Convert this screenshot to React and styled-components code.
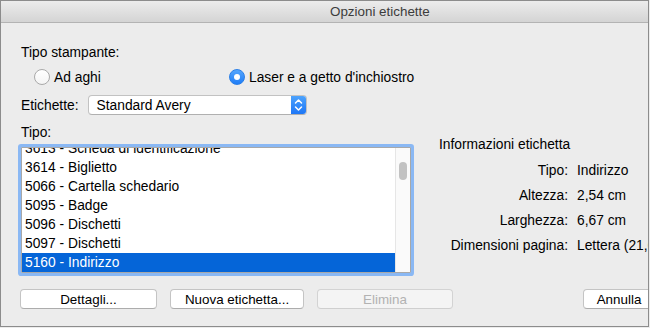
import React from 'react';
import styled, { createGlobalStyle } from 'styled-components';

const Global = createGlobalStyle`
  html, body { margin: 0; padding: 0; background: #ececec; }
  body { font-family: "Liberation Sans", Helvetica, Arial, sans-serif; color: #000; }
`;

const Frame = styled.div`
  width: 649px;
  height: 327px;
  box-sizing: border-box;
  border: 1px solid #8c8c8c;
  background: #ececec;
  overflow: hidden;
  display: flex;
  flex-direction: column;
`;

const TitleBar = styled.div`
  height: 21px;
  flex: none;
  border-bottom: 1px solid #b3b3b3;
  background: linear-gradient(#ececec, #d4d4d4);
  display: flex;
  align-items: center;
  padding-left: 329px;
  font-size: 13.4px;
  color: #3c3c3c;
  white-space: nowrap;
`;

const Body = styled.div`
  flex: 1;
  padding: 22px 0 0 20px;
  display: flex;
  flex-direction: column;
  font-size: 13.8px;
  white-space: nowrap;
`;

const Label = styled.div`
  height: 16px;
  line-height: 16px;
`;

const RadioRow = styled.div`
  display: flex;
  align-items: center;
  height: 18px;
  margin-top: 7px;
  padding-left: 13px;
`;

const RadioItem = styled.label`
  display: flex;
  align-items: center;
  gap: 4px;
  width: ${p => p.$w}px;
`;

const RadioCircle = styled.span`
  width: 16px;
  height: 16px;
  box-sizing: border-box;
  border-radius: 50%;
  display: flex;
  align-items: center;
  justify-content: center;
  ${p => p.$on ? `
    background: linear-gradient(#55a6fd, #1f7df7);
    border: 1px solid #2a7fe8;
  ` : `
    background: linear-gradient(#ffffff, #f4f4f4);
    border: 1px solid #a9a9a9;
  `}
`;

const RadioDot = styled.span`
  width: 6px;
  height: 6px;
  border-radius: 50%;
  background: #fff;
`;

const SelectRow = styled.div`
  display: flex;
  align-items: center;
  gap: 9px;
  margin-top: 9px;
  height: 20px;
`;

const Select = styled.div`
  width: 219px;
  height: 20px;
  box-sizing: border-box;
  border: 1px solid #c2c2c2;
  border-bottom-color: #b0b0b0;
  border-radius: 4px;
  background: #fff;
  display: flex;
  align-items: center;
  justify-content: space-between;
  padding-left: 8px;
  overflow: hidden;
`;

const Stepper = styled.span`
  width: 16px;
  height: 20px;
  margin-right: -1px;
  background: linear-gradient(#4fa5fd, #1b74f6);
  border-radius: 0 4px 4px 0;
  display: flex;
  align-items: center;
  justify-content: center;
`;

const Main = styled.div`
  display: flex;
  align-items: flex-start;
  margin-top: 10px;
`;

const LeftCol = styled.div`
  display: flex;
  flex-direction: column;
  gap: 6px;
`;

const ListBox = styled.div`
  width: 390px;
  height: 126px;
  box-sizing: border-box;
  border: 1px solid #a8a8a8;
  background: #fff;
  box-shadow: 0 0 0 3px #8ab8f4;
  border-radius: 1px;
  display: flex;
  overflow: hidden;
`;

const Rows = styled.div`
  flex: 1;
  overflow: hidden;
`;

const RowsInner = styled.div`
  margin-top: -9px;
`;

const Row = styled.div`
  height: 19px;
  line-height: 19px;
  padding-left: 3px;
  background: ${p => p.$sel ? '#0565d8' : 'transparent'};
  color: ${p => p.$sel ? '#fff' : '#000'};
`;

const ScrollTrack = styled.div`
  width: 14px;
  flex: none;
  background: #fafafa;
  border-left: 1px solid #e6e6e6;
  display: flex;
  justify-content: center;
`;

const Thumb = styled.div`
  width: 8px;
  height: 18px;
  margin-top: 14px;
  border-radius: 4px;
  background: #c2c2c2;
`;

const Info = styled.div`
  margin-left: 28px;
  padding-top: 12px;
  display: flex;
  flex-direction: column;
`;

const InfoTitle = styled.div`
  height: 16px;
  line-height: 16px;
  margin-bottom: 10px;
`;

const InfoGrid = styled.div`
  display: grid;
  grid-template-columns: 129px auto;
  column-gap: 9px;
  row-gap: 9px;
  line-height: 16px;
`;

const InfoKey = styled.div`
  text-align: right;
`;

const Buttons = styled.div`
  display: flex;
  gap: 13px;
  margin-top: 16px;
  margin-left: -1px;
`;

const Button = styled.div`
  width: ${p => p.$w}px;
  height: 20px;
  box-sizing: border-box;
  flex: none;
  border: 1px solid ${p => p.$disabled ? '#d3d3d3' : '#c4c4c4'};
  border-bottom-color: ${p => p.$disabled ? '#cfcfcf' : '#acacac'};
  border-radius: 4px;
  background: ${p => p.$disabled ? '#f4f4f4' : '#fff'};
  color: ${p => p.$disabled ? '#b2b2b2' : '#000'};
  display: flex;
  align-items: center;
  justify-content: center;
  font-size: 13.4px;
  ${p => p.$push ? 'margin-left: auto; margin-right: -7px;' : ''}
`;

const items = [
  '3613 - Scheda di identificazione',
  '3614 - Biglietto',
  '5066 - Cartella schedario',
  '5095 - Badge',
  '5096 - Dischetti',
  '5097 - Dischetti',
  '5160 - Indirizzo',
  '5161 - Indirizzo',
];

export default function App() {
  return (
    <>
      <Global />
      <Frame>
        <TitleBar>Opzioni etichette</TitleBar>
        <Body>
          <Label>Tipo stampante:</Label>
          <RadioRow>
            <RadioItem $w={195}>
              <RadioCircle />
              Ad aghi
            </RadioItem>
            <RadioItem $w={220}>
              <RadioCircle $on><RadioDot /></RadioCircle>
              Laser e a getto d'inchiostro
            </RadioItem>
          </RadioRow>
          <SelectRow>
            <span>Etichette:</span>
            <Select>
              <span>Standard Avery</span>
              <Stepper>
                <svg width="9" height="14" viewBox="0 0 9 14">
                  <path d="M1.5 5 L4.5 2 L7.5 5 M1.5 9 L4.5 12 L7.5 9" fill="none" stroke="#fff" strokeWidth="1.5" strokeLinecap="round" strokeLinejoin="round" />
                </svg>
              </Stepper>
            </Select>
          </SelectRow>
          <Main>
            <LeftCol>
              <Label>Tipo:</Label>
              <ListBox>
                <Rows>
                  <RowsInner>
                    {items.map((t, i) => (
                      <Row key={t + i} $sel={i === 6}>{t}</Row>
                    ))}
                  </RowsInner>
                </Rows>
                <ScrollTrack><Thumb /></ScrollTrack>
              </ListBox>
            </LeftCol>
            <Info>
              <InfoTitle>Informazioni etichetta</InfoTitle>
              <InfoGrid>
                <InfoKey>Tipo:</InfoKey><div>Indirizzo</div>
                <InfoKey>Altezza:</InfoKey><div>2,54 cm</div>
                <InfoKey>Larghezza:</InfoKey><div>6,67 cm</div>
                <InfoKey>Dimensioni pagina:</InfoKey><div>Lettera (21,6 x 27,9 cm)</div>
              </InfoGrid>
            </Info>
          </Main>
          <Buttons>
            <Button $w={137}>Dettagli...</Button>
            <Button $w={134}>Nuova etichetta...</Button>
            <Button $w={136} $disabled>Elimina</Button>
            <Button $w={72} $push>Annulla</Button>
          </Buttons>
        </Body>
      </Frame>
    </>
  );
}
